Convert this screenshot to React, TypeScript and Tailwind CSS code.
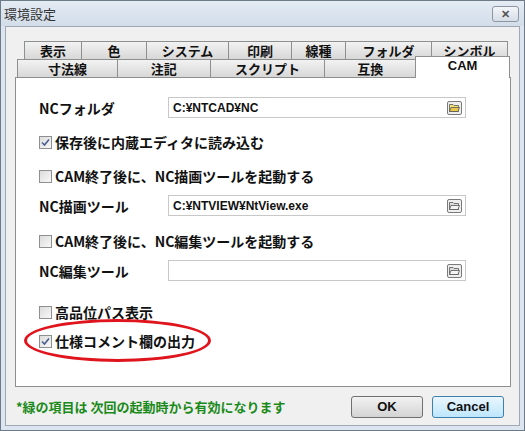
import React from "react";

const F = { fontFamily: '"MS PGothic","Noto Sans CJK JP","Liberation Sans",sans-serif' };

function Tab({ w, label }: { w: number; label: string }) {
  return (
    <div style={{ width: w }} className="h-[18px] border border-[#8e8f8f] border-b-0 -ml-px first:ml-0 bg-gradient-to-b from-[#f2f2f2] to-[#d8d8d8] flex items-center justify-center text-[13px] font-bold text-[#111] leading-none overflow-hidden">
      {label}
    </div>
  );
}

function Check({ checked, label, className = "" }: { checked?: boolean; label: string; className?: string }) {
  return (
    <div className={"h-[14px] flex items-center gap-[3px] text-[14px] leading-none font-bold text-[#111] " + className}>
      <div className="w-[13px] h-[13px] border border-[#8f8f8f] bg-gradient-to-br from-[#dcdcdc] to-[#f8f8f8] flex items-center justify-center">
        {checked && (
          <svg width="9" height="9" viewBox="0 0 9 9"><path d="M1 4.5 L3.5 7 L8 1.5" stroke="#4a5f8f" strokeWidth="1.6" fill="none" /></svg>
        )}
      </div>
      <span>{label}</span>
    </div>
  );
}

function Folder({ open }: { open?: boolean }) {
  return (
    <div className="w-[15px] h-[14px] border border-[#7a7a7a] rounded-[2px] bg-[#eee] flex items-center justify-center">
      <svg width="11" height="9" viewBox="0 0 11 9">
        <path d="M0.5 1.5 H4 L5 2.5 H9.5 V8.5 H0.5 Z" fill={open ? "#f3e27a" : "#ddd"} stroke="#555" strokeWidth="0.8" />
        <path d="M2 4.5 H10.5 L9 8.5 H0.5 Z" fill={open ? "#e8c94a" : "#f4f4f4"} stroke="#555" strokeWidth="0.8" />
      </svg>
    </div>
  );
}

function Field({ label, value, open, className = "" }: { label: string; value: string; open?: boolean; className?: string }) {
  return (
    <div className={"flex items-center h-[21px] leading-none " + className}>
      <div className="w-[129px] text-[14px] font-bold text-[#111]">{label}</div>
      <div className="w-[298px] h-[21px] border border-[#c8c8c8] bg-white flex items-center justify-between pl-[4px] pr-[3px]">
        <span className="text-[12px] font-bold text-[#111]" style={{ fontFamily: '"Liberation Sans",sans-serif' }}>{value}</span>
        <Folder open={open} />
      </div>
    </div>
  );
}

export default function App() {
  return (
    <div style={F} className="w-[525px] h-[431px] bg-[#dde6f0] border border-[#6d7a88] flex flex-col">
      <div className="h-[25px] flex items-center justify-between pl-[3px] pr-[5px] bg-gradient-to-b from-[#e4ebf3] to-[#d2dde9]">
        <span className="text-[13px] text-[#333]">環境設定</span>
        <div className="w-[27px] h-[16px] border border-[#8d97a3] rounded-[3px] bg-gradient-to-b from-[#f4f6f9] to-[#d6dde6] flex items-center justify-center text-[11px] font-bold text-[#555]">✕</div>
      </div>
      <div className="flex-1 mx-[4px] mb-[4px] bg-[#f0f0f0] border border-[#a0a8b4] flex flex-col px-[9px] pt-[14px] relative">
        <div className="flex pl-[9px]">
          <Tab w={58} label="表示" />
          <Tab w={66} label="色" />
          <Tab w={83} label="システム" />
          <Tab w={64} label="印刷" />
          <Tab w={55} label="線種" />
          <Tab w={87} label="フォルダ" />
          <Tab w={77} label="シンボル" />
        </div>
        <div className="flex pl-[2px] items-end">
          <Tab w={101} label="寸法線" />
          <Tab w={94} label="注記" />
          <Tab w={116} label="スクリプト" />
          <Tab w={92} label="互換" />
          <div className="w-[95px] h-[22px] -ml-px -mt-[4px] border border-[#8e8f8f] border-b-0 bg-white flex items-start justify-center pt-[2px] text-[13px] leading-none font-bold text-[#111] relative z-10 mb-[-1px]" style={{ fontFamily: '"Liberation Sans",sans-serif' }}>CAM</div>
        </div>
        <div className="h-[310px] w-[496px] bg-white border border-[#8e8f8f] pl-[23px] pt-[19px] flex flex-col relative">
          <Field label="NCフォルダ" value="C:¥NTCAD¥NC" open />
          <Check checked label="保存後に内蔵エディタに読み込む" className="mt-[17px]" />
          <Check label="CAM終了後に、NC描画ツールを起動する" className="mt-[20px]" />
          <Field label="NC描画ツール" value="C:¥NTVIEW¥NtView.exe" className="mt-[12px]" />
          <Check label="CAM終了後に、NC編集ツールを起動する" className="mt-[18px]" />
          <Field label="NC編集ツール" value="" className="mt-[12px]" />
          <Check label="高品位パス表示" className="mt-[24px]" />
          <Check checked label="仕様コメント欄の出力" className="mt-[15px]" />
          <div className="absolute left-[8px] top-[241px] w-[187px] h-[43px] border-[3px] border-[#e0141c] rounded-[50%]" />
        </div>
        <div className="flex items-center mt-[9px] pl-[1px]">
          <span className="text-[13px] font-bold text-[#1a8a1a] flex-1">*緑の項目は 次回の起動時から有効になります</span>
          <div className="w-[72px] h-[22px] border border-[#707070] rounded-[3px] bg-gradient-to-b from-[#f2f2f2] to-[#d4d4d4] flex items-center justify-center text-[13px] font-bold text-[#111]" style={{ fontFamily: '"Liberation Sans",sans-serif' }}>OK</div>
          <div className="w-[72px] h-[22px] ml-[9px] mr-[6px] border border-[#3c7fb1] rounded-[3px] bg-gradient-to-b from-[#eaf6fd] to-[#bee6fd] flex items-center justify-center text-[13px] font-bold text-[#111]" style={{ fontFamily: '"Liberation Sans",sans-serif' }}>Cancel</div>
        </div>
      </div>
    </div>
  );
}
